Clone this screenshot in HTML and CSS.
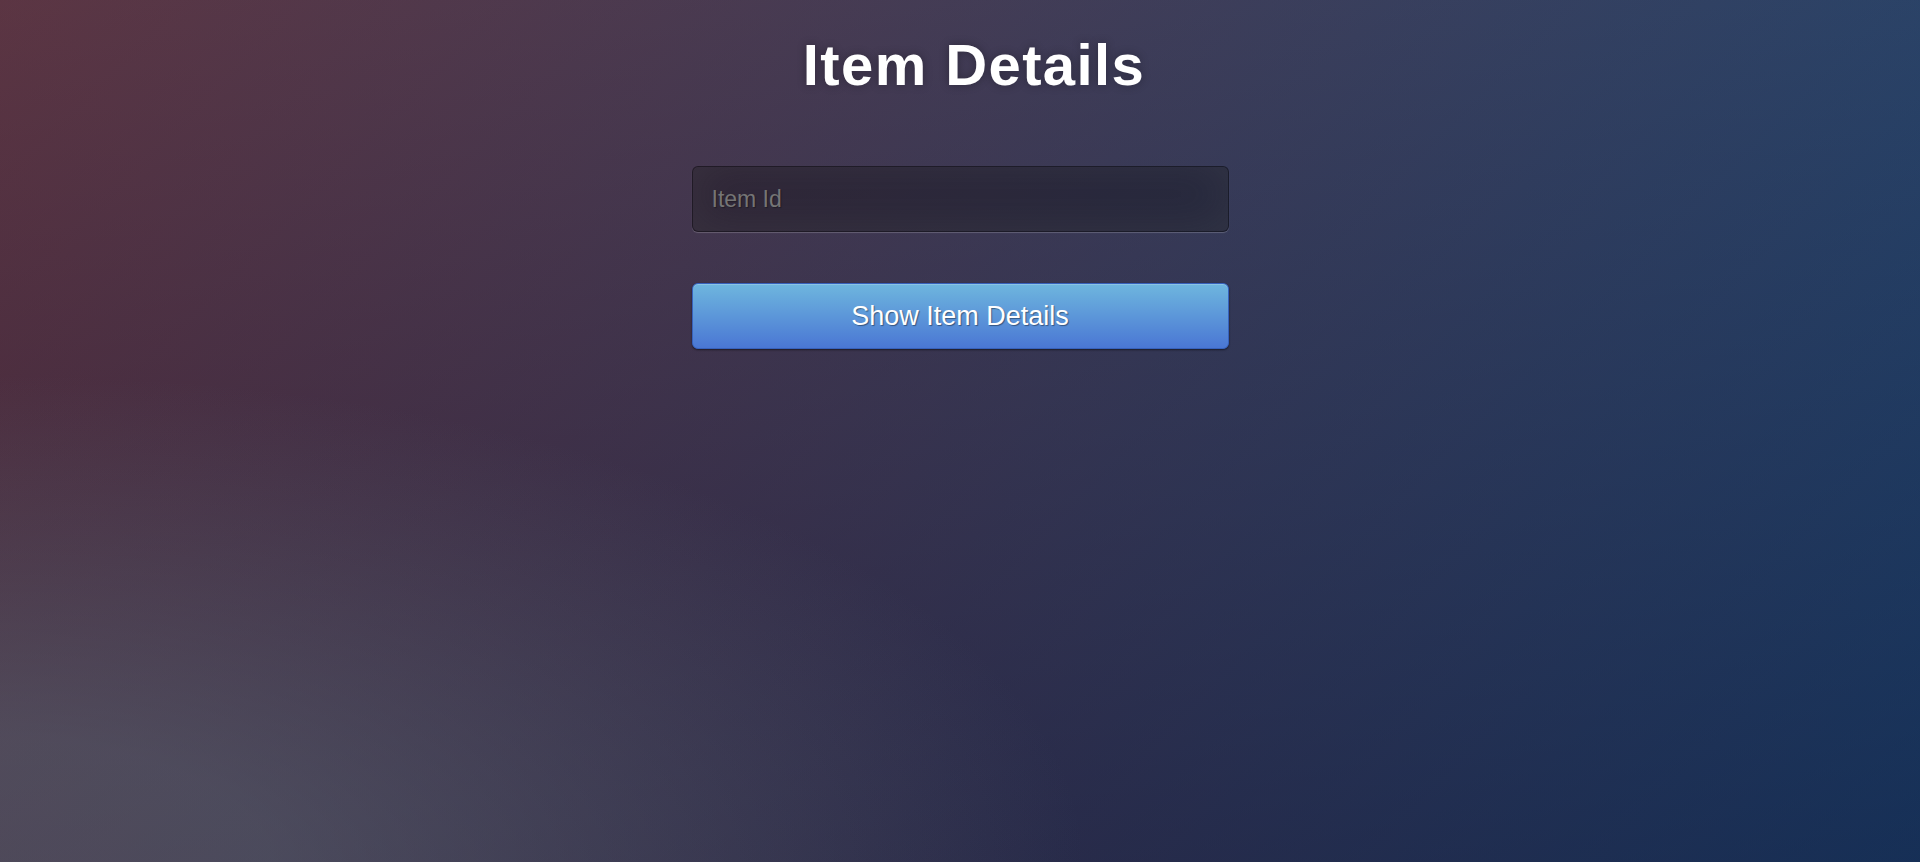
FILE: index.html
```html
<!DOCTYPE html>
<html lang="en">
<head>
<meta charset="utf-8">
<title>Item Details</title>
<link rel="stylesheet" href="styles.css">
</head>
<body>
  <main class="panel">
    <h1 class="title">Item Details</h1>
    <form class="form" onsubmit="return false">
      <input class="field" type="text" name="itemId" placeholder="Item Id">
      <button class="btn-primary" type="submit">Show Item Details</button>
    </form>
  </main>
</body>
</html>
```

FILE: styles.css
```css
html, body {
  margin: 0;
  height: 100%;
}

body {
  font-family: "Liberation Sans", Arial, sans-serif;
  background-color: #092756;
  background-image:
    radial-gradient(ellipse farthest-corner at 0% 100%, rgba(104,128,138,0.4) 10%, rgba(138,114,76,0) 40%),
    linear-gradient(to bottom, rgba(57,173,219,0.25) 0%, rgba(42,60,87,0.4) 100%),
    linear-gradient(135deg, #670d10 0%, #092756 100%);
  background-repeat: no-repeat;
}

.panel {
  width: 537px;
  margin: 0 auto;
  padding-top: 32px;
}

.title {
  margin: 0 0 68px;
  padding-left: 28px;
  font-size: 58px;
  line-height: 66px;
  font-weight: bold;
  letter-spacing: 1.4px;
  color: #fff;
  text-align: center;
  text-shadow: 0 0 10px rgba(0,0,0,0.3);
}

.form {
  display: flex;
  flex-direction: column;
  gap: 51px;
}

.field {
  box-sizing: border-box;
  width: 100%;
  height: 66px;
  margin: 0;
  padding: 0 19px;
  font-family: "Liberation Sans", Arial, sans-serif;
  font-size: 23px;
  color: #fff;
  background: rgba(0,0,0,0.3);
  border: 1px solid rgba(0,0,0,0.3);
  border-radius: 6px;
  outline: none;
  text-shadow: 1px 1px 1px rgba(0,0,0,0.3);
  box-shadow: inset 0 -5px 45px rgba(100,100,100,0.2), 0 1px 1px rgba(255,255,255,0.2);
}

.field::placeholder {
  color: #757575;
}

.btn-primary {
  box-sizing: border-box;
  width: 100%;
  height: 66px;
  margin: 0;
  padding: 0;
  font-family: "Liberation Sans", Arial, sans-serif;
  font-size: 27px;
  color: #fff;
  text-shadow: 1px 1px 1px rgba(0,0,0,0.4);
  background-color: #4a77d4;
  background-image: linear-gradient(to bottom, #6eb6de, #4a77d4);
  border: 1px solid #3762bc;
  border-radius: 6px;
  box-shadow: inset 0 1px 0 rgba(255,255,255,0.2), 0 1px 2px rgba(0,0,0,0.5);
  cursor: pointer;
}
```
